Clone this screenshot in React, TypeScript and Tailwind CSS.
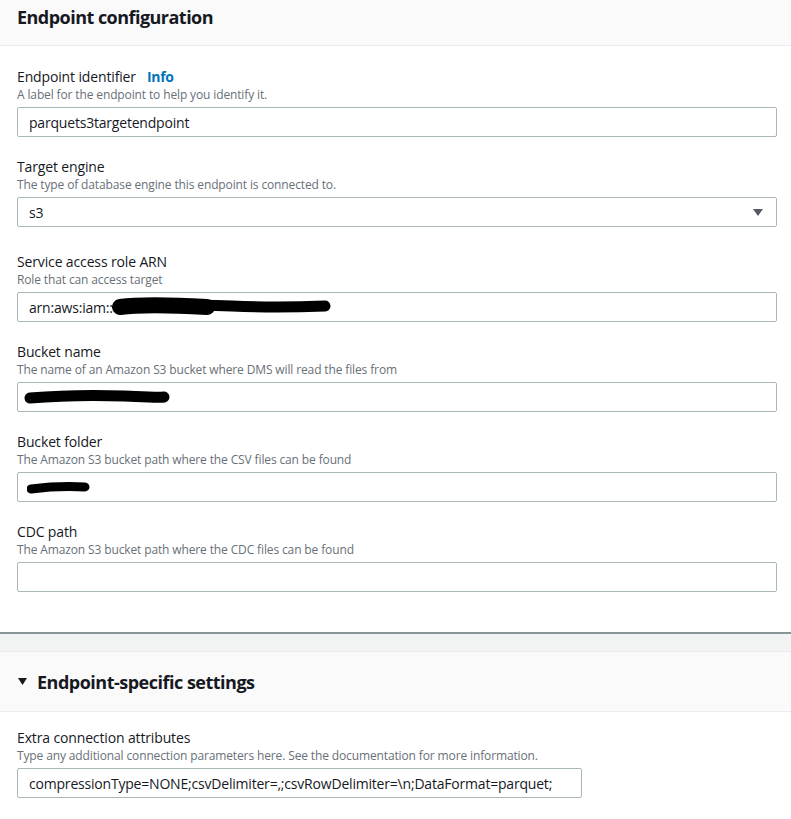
import React from "react";

const FONT = { fontFamily: '"Open Sans", "Noto Sans", sans-serif' };

function Label({ children, info }: { children: React.ReactNode; info?: boolean }) {
  return (
    <div className="h-[20px] leading-[20px] text-[14px] text-[#16191f] tracking-[-0.14px] flex items-center">
      <span>{children}</span>
      {info && <span className="ml-[11px] font-bold text-[#0073bb] tracking-[-0.3px]">Info</span>}
    </div>
  );
}

function Desc({ children }: { children: React.ReactNode }) {
  return <div className="h-[16px] leading-[16px] text-[12px] text-[#687078] tracking-[-0.13px]">{children}</div>;
}

function Box({ children, width = "w-[760px]", select }: { children?: React.ReactNode; width?: string; select?: boolean }) {
  return (
    <div
      className={`${width} mt-[4px] h-[30px] border border-[#aab7b8] bg-white rounded-[2px] pl-[11px] pr-[13px] flex items-center text-[14px] text-[#16191f] tracking-[-0.2px]`}
    >
      <div className="flex-1 flex items-center whitespace-nowrap">{children}</div>
      {select && (
        <svg width="10" height="7" viewBox="0 0 10 7">
          <path d="M0 0 L10 0 L5 7 Z" fill="#545b64" />
        </svg>
      )}
    </div>
  );
}

function Field({
  label,
  desc,
  info,
  children,
  select,
  mb = "mb-[20px]",
  width,
}: {
  label: string;
  desc: string;
  info?: boolean;
  children?: React.ReactNode;
  select?: boolean;
  mb?: string;
  width?: string;
}) {
  return (
    <div className={mb}>
      <Label info={info}>{label}</Label>
      <Desc>{desc}</Desc>
      <Box select={select} width={width}>
        {children}
      </Box>
    </div>
  );
}

export default function App() {
  return (
    <div className="w-[791px] h-[819px] bg-white overflow-hidden" style={FONT}>
      {/* Section 1 */}
      <div className="h-[46px] bg-[#fafafa] border-b border-[#eaeded] pl-[17px] flex items-center">
        <h2 className="text-[18px] font-bold text-[#16191f] tracking-[-0.53px] leading-[22px] -mt-[12px]">
          Endpoint configuration
        </h2>
      </div>
      <div className="pl-[17px] pr-[14px] pt-[21px] pb-[20px]">
        <Field label="Endpoint identifier" info desc="A label for the endpoint to help you identify it.">
          parquets3targetendpoint
        </Field>
        <Field label="Target engine" desc="The type of database engine this endpoint is connected to." select mb="mb-[25px]">
          s3
        </Field>
        <Field label="Service access role ARN" desc="Role that can access target">
          <span>arn:aws:iam::</span>
          <svg width="222" height="22" viewBox="0 0 222 22" className="-ml-[1px]">
            <path d="M8 12 C 40 10, 80 8, 120 10 S 190 11, 213 10" stroke="#000" strokeWidth="11" strokeLinecap="round" fill="none" />
            <path d="M8 11 C 30 8, 60 9, 95 11" stroke="#000" strokeWidth="16" strokeLinecap="round" fill="none" />
          </svg>
        </Field>
        <Field label="Bucket name" desc="The name of an Amazon S3 bucket where DMS will read the files from">
          <svg width="150" height="20" viewBox="0 0 150 20" className="-ml-[5px]">
            <path d="M6 11 C 30 9, 70 8, 100 9 S 135 11, 140 10" stroke="#000" strokeWidth="11" strokeLinecap="round" fill="none" />
          </svg>
        </Field>
        <Field label="Bucket folder" desc="The Amazon S3 bucket path where the CSV files can be found">
          <svg width="70" height="20" viewBox="0 0 70 20" className="-ml-[2px]">
            <path d="M4 12 C 20 10, 40 9, 58 10" stroke="#000" strokeWidth="9" strokeLinecap="round" fill="none" />
          </svg>
        </Field>
        <Field label="CDC path" desc="The Amazon S3 bucket path where the CDC files can be found" />
      </div>

      {/* Divider */}
      <div className="border-t-[2px] border-[#879596] h-[20px] bg-[#f2f3f3] border-b border-b-[#eaeded]" />

      {/* Section 2 */}
      <div className="h-[60px] bg-[#fafafa] border-b border-[#eaeded] pl-[18px] flex items-center">
        <svg width="9" height="7" viewBox="0 0 9 7" className="mr-[10px]">
          <path d="M0 0 L9 0 L4.5 7 Z" fill="#16191f" />
        </svg>
        <h2 className="text-[18px] font-bold text-[#16191f] tracking-[-0.5px] leading-[22px]">
          Endpoint-specific settings
        </h2>
      </div>
      <div className="pl-[17px] pr-[14px] pt-[16px]">
        <Field
          label="Extra connection attributes"
          desc="Type any additional connection parameters here. See the documentation for more information."
          width="w-[565px]"
        >
          {"compressionType=NONE;csvDelimiter=,;csvRowDelimiter=\\n;DataFormat=parquet;"}
        </Field>
      </div>
    </div>
  );
}
